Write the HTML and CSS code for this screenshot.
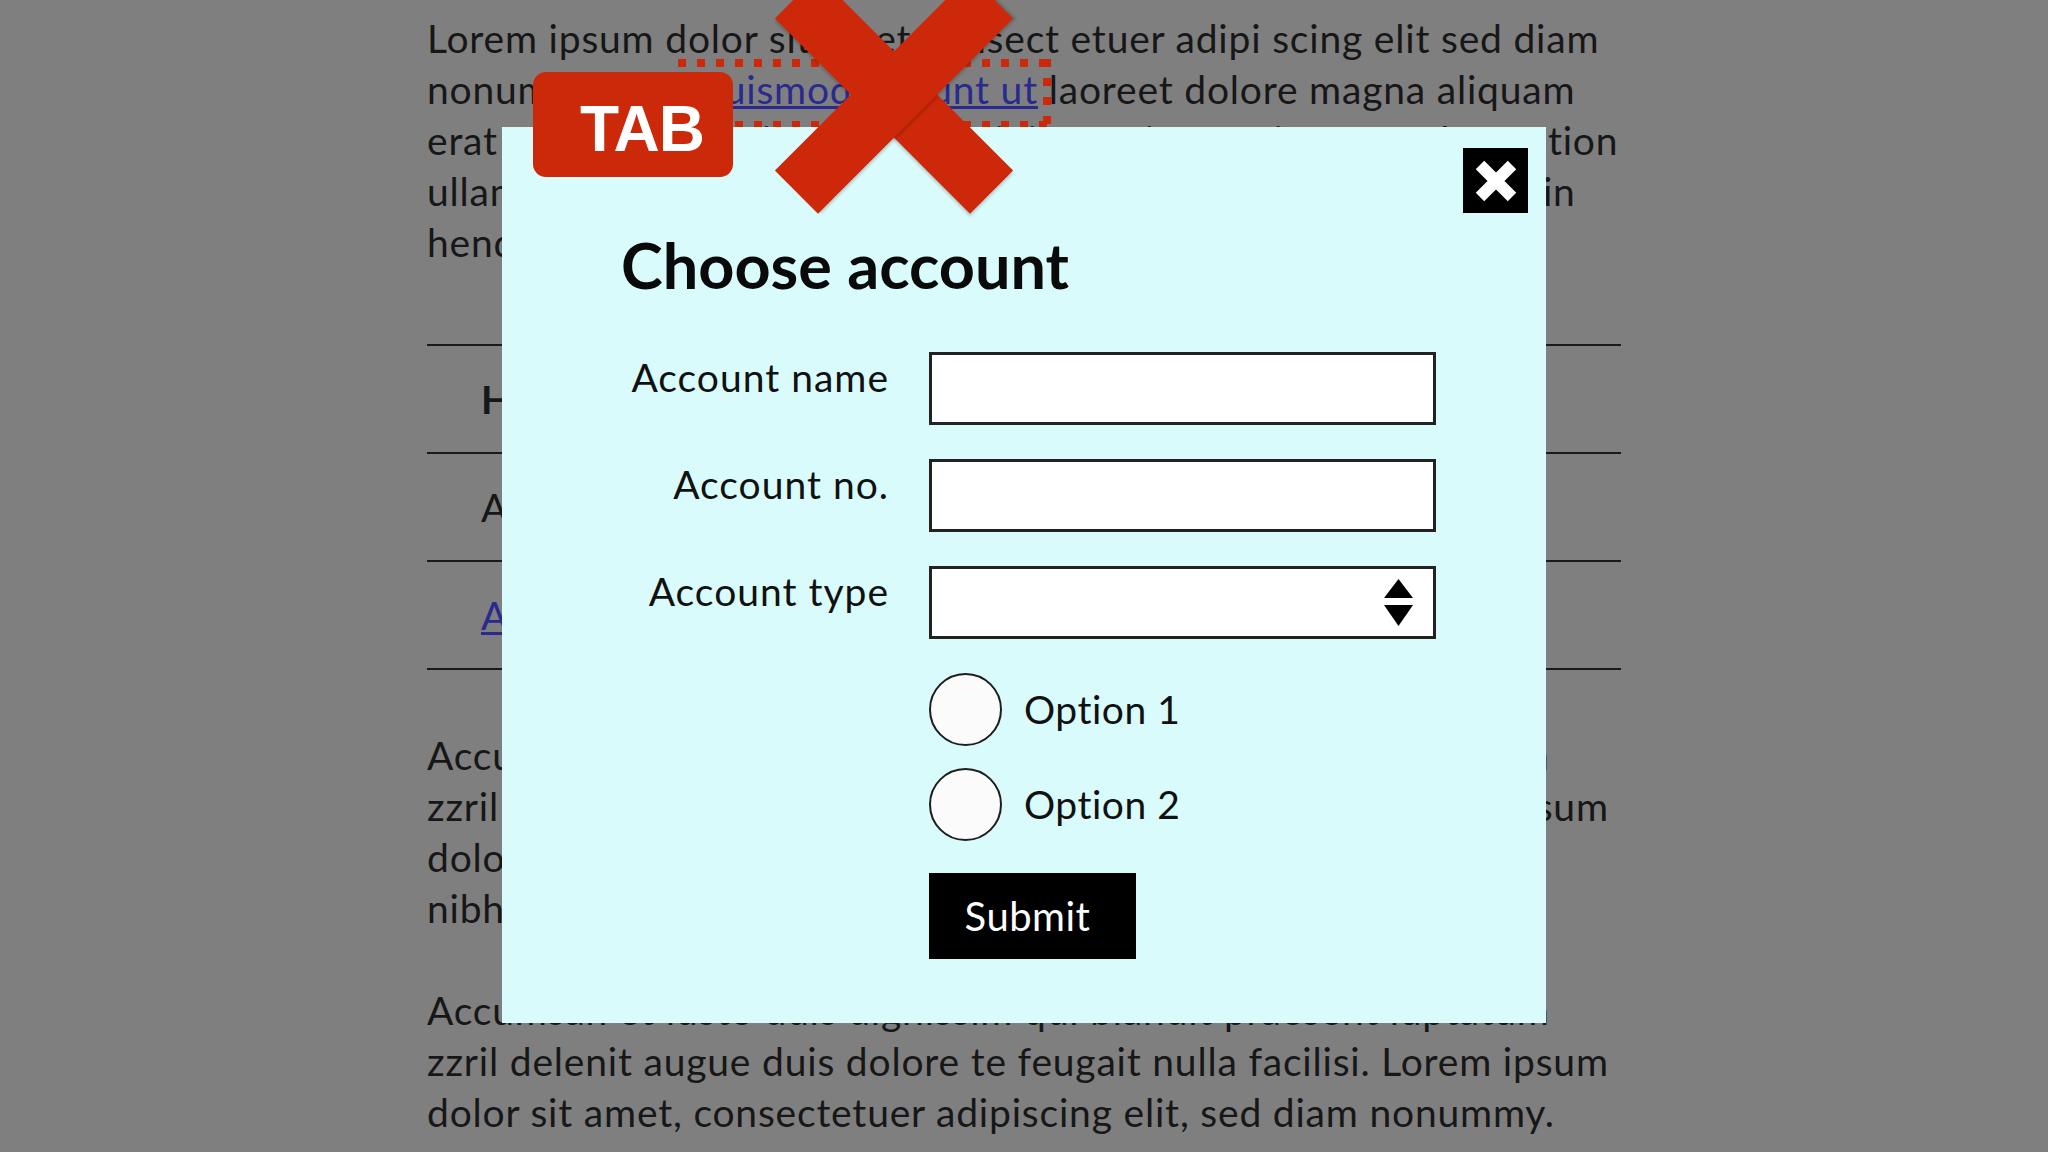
FILE: index.html
```html
<!DOCTYPE html>
<html>
<head>
  <title>Choose account</title>
  <link rel="stylesheet" href="styles.css">
</head>
<body>
  <main class="page">
    <p class="intro">Lorem ipsum dolor sit amet consect etuer adipi scing elit sed diam nonummy nibh <a href="#" class="focused">euismod tincunt ut</a> laoreet dolore magna aliquam erat volutpat. Ut wisi enim ad minim veniam, quis nostrud ex tation ullamcorper suscipit lobortis nisl ut aliquip ex ea commodo vel in hendrerit in vulputate velit esse.</p>

    <table class="accounts">
      <tr>
        <th>Holder</th>
        <th>Number</th>
        <th>Type</th>
      </tr>
      <tr>
        <td>Alex Smith</td>
        <td>0012 4455</td>
        <td>Savings</td>
      </tr>
      <tr>
        <td><a href="#">Add account</a></td>
        <td></td>
        <td></td>
      </tr>
    </table>

    <p class="para">Accumsan et iusto duis dignissim qui blandit praesent luptatum zzril delenit augue duis dolore te feugait nulla facilisi. Lorem ipsum dolor sit amet, consectetuer adipiscing elit, sed diam nonummy nibh euismod tincidunt ut laoreet.</p>
    <p class="para">Accumsan et iusto duis dignissim qui blandit praesent luptatum zzril delenit augue duis dolore te feugait nulla facilisi. Lorem ipsum dolor sit amet, consectetuer adipiscing elit, sed diam nonummy.</p>
  </main>

  <div class="dialog">
    <button class="close" aria-label="Close">
      <svg width="42" height="42" viewBox="0 0 42 42">
        <path d="M5 5 L37 37 M37 5 L5 37" stroke="#fff" stroke-width="12"/>
      </svg>
    </button>
    <h2>Choose account</h2>
    <form class="account-form">
      <label class="field-label">Account name</label>
      <div class="field"></div>

      <label class="field-label">Account no.</label>
      <div class="field"></div>

      <label class="field-label">Account type</label>
      <div class="field select">
        <svg width="29" height="47" viewBox="0 0 29 47">
          <polygon points="14.5,0 29,19 0,19" fill="#000"/>
          <polygon points="0,26 29,26 14.5,47" fill="#000"/>
        </svg>
      </div>

      <div class="options">
        <label class="option"><span class="radio"></span>Option 1</label>
        <label class="option"><span class="radio"></span>Option 2</label>
      </div>

      <button type="button" class="submit">Submit</button>
    </form>
  </div>

  <div class="tab-key">TAB</div>
  <div class="no-entry"><span></span><span></span></div>
</body>
</html>
```

FILE: styles.css
```css
body {
  margin: 0;
  background: #7f7f80;
  font-family: Lato, "Open Sans", sans-serif;
  font-size: 39px;
  line-height: 51px;
  letter-spacing: 0.8px;
  color: #171717;
  overflow: hidden;
}
a {
  color: #2a2a8e;
}
.page {
  width: 1194px;
  margin: 0 auto;
  padding-top: 13px;
}
p {
  margin: 0;
}
.intro {
  margin-bottom: 76px;
}
.para {
  margin-bottom: 51px;
}

/* keyboard focus ring on the link */
.focused {
  position: relative;
}
.focused::after {
  content: "";
  position: absolute;
  left: -24px;
  right: -13px;
  top: -7px;
  bottom: -17px;
  background:
    repeating-linear-gradient(90deg, #ce280a 0 8px, transparent 8px 19px) left top / 100% 8px no-repeat,
    repeating-linear-gradient(90deg, #ce280a 0 8px, transparent 8px 19px) left bottom / 100% 8px no-repeat,
    repeating-linear-gradient(180deg, #ce280a 0 8px, transparent 8px 19px) left top / 8px 100% no-repeat,
    repeating-linear-gradient(180deg, #ce280a 0 8px, transparent 8px 19px) right top / 8px 100% no-repeat;
}

.accounts {
  width: 100%;
  border-collapse: collapse;
  border-bottom: 2px solid #1a1a1a;
  margin-bottom: 60px;
}
.accounts tr {
  border-top: 2px solid #1a1a1a;
}
.accounts th,
.accounts td {
  height: 106px;
  padding: 0 0 0 54px;
  text-align: left;
  vertical-align: middle;
}
.accounts th {
  font-weight: 700;
}

/* modal */
.dialog {
  position: absolute;
  top: 127px;
  left: 50%;
  margin-left: -522px;
  width: 1044px;
  height: 896px;
  box-sizing: border-box;
  padding: 100px 0 0 119px;
  background: #d9fbfb;
  color: #111;
  letter-spacing: 0.5px;
}
.dialog h2 {
  margin: 0 0 49px;
  font-size: 63px;
  line-height: 76px;
  font-weight: 700;
  letter-spacing: 0;
  color: #0a0a0a;
}
.close {
  position: absolute;
  top: 21px;
  right: 18px;
  width: 65px;
  height: 65px;
  padding: 0;
  border: none;
  background: #000;
  display: flex;
  align-items: center;
  justify-content: center;
}
.account-form {
  display: grid;
  grid-template-columns: 268px 507px;
  column-gap: 40px;
  row-gap: 34px;
  align-items: start;
}
.field-label {
  font-size: 39px;
  line-height: 47px;
  letter-spacing: 1px;
  padding-top: 2px;
  text-align: right;
}
.field {
  height: 73px;
  box-sizing: border-box;
  border: 3px solid #222;
  background: #fff;
}
.select {
  display: flex;
  align-items: center;
  justify-content: flex-end;
  padding-right: 20px;
}
.options {
  grid-column: 2;
  display: flex;
  flex-direction: column;
  gap: 22px;
}
.option {
  display: flex;
  align-items: center;
  gap: 22px;
  height: 73px;
  font-size: 39px;
  line-height: 47px;
}
.radio {
  width: 73px;
  height: 73px;
  box-sizing: border-box;
  border: 2px solid #1e1e1e;
  border-radius: 50%;
  background: #fbfbfb;
}
.submit {
  grid-column: 2;
  justify-self: start;
  margin-top: -2px;
  width: 207px;
  height: 86px;
  padding: 0 10px 0 0;
  border: none;
  background: #000;
  color: #fff;
  font-family: Lato, sans-serif;
  font-size: 40px;
  letter-spacing: 0.5px;
}

/* TAB key badge */
.tab-key {
  position: absolute;
  left: 533px;
  top: 72px;
  width: 200px;
  height: 105px;
  box-sizing: border-box;
  padding: 10px 0 0 18px;
  border-radius: 13px;
  background: #cc290b;
  color: #fff;
  font-family: "Liberation Sans", Arial, sans-serif;
  font-weight: 700;
  font-size: 64px;
  letter-spacing: -1px;
  display: flex;
  align-items: center;
  justify-content: center;
}

/* big red cross */
.no-entry {
  position: absolute;
  left: 894px;
  top: 94px;
}
.no-entry span {
  position: absolute;
  left: -138px;
  top: -30px;
  width: 276px;
  height: 61px;
  background: #ce280a;
  box-shadow: 2px 2px 3px rgba(0, 0, 0, 0.18);
  transform: rotate(45deg);
}
.no-entry span + span {
  transform: rotate(-45deg);
}
```
